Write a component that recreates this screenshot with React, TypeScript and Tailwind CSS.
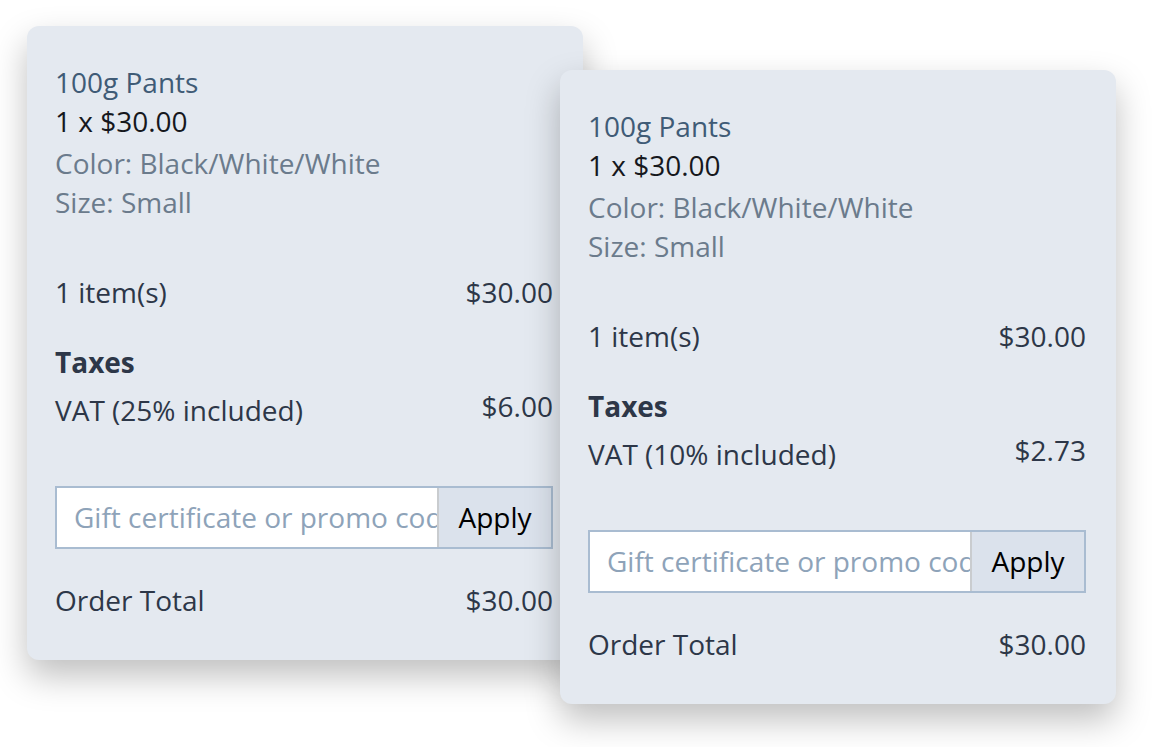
import React from "react";

type CardProps = { vat: string; vatAmount: string };

function Card({ vat, vatAmount }: CardProps) {
  return (
    <div className="w-[556px] shrink-0 rounded-[12px] bg-[#e4e9f0] pt-[37px] pl-[28px] pr-[30px] pb-[40px] shadow-[0_16px_34px_rgba(0,0,0,0.25)] text-[28px] leading-[39px] text-[#2d3748]">
      <div className="text-[#3f5b76]">100g Pants</div>
      <div className="text-[#16181d]">1 x $30.00</div>
      <div className="mt-[3px] text-[#6b7b8c]">Color: Black/White/White</div>
      <div className="text-[#6b7b8c]">Size: Small</div>
      <div className="mt-[51px] flex justify-between">
        <span>1 item(s)</span>
        <span>$30.00</span>
      </div>
      <div className="mt-[31px] font-bold">Taxes</div>
      <div className="mt-[9px] flex items-start justify-between">
        <span>{vat}</span>
        <span className="leading-[30px]">{vatAmount}</span>
      </div>
      <div className="mt-[56px] flex h-[63px] border-2 border-[#a9bcd1]">
        <input
          className="min-w-0 flex-1 bg-white pl-[17px] text-[28px] text-[#2d3748] outline-none placeholder:text-[#8ea3b9]"
          placeholder="Gift certificate or promo code"
          readOnly
        />
        <button className="w-[114px] shrink-0 border-l-2 border-[#c9cccf] bg-[#dbe2ec] text-[28px] text-black">
          Apply
        </button>
      </div>
      <div className="mt-[32px] flex justify-between">
        <span>Order Total</span>
        <span>$30.00</span>
      </div>
    </div>
  );
}

export default function App() {
  return (
    <div
      className="h-[747px] w-[1160px] overflow-hidden bg-white"
      style={{ fontFamily: '"Open Sans", "Noto Sans", sans-serif' }}
    >
      <div className="flex items-start pl-[27px] pt-[26px]">
        <Card vat="VAT (25% included)" vatAmount="$6.00" />
        <div className="relative ml-[-23px] mt-[44px]">
          <Card vat="VAT (10% included)" vatAmount="$2.73" />
        </div>
      </div>
    </div>
  );
}
